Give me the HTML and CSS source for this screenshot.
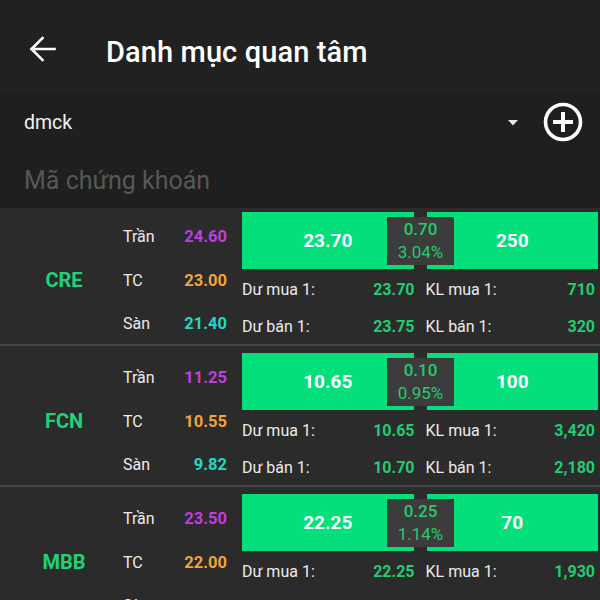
FILE: index.html
```html
<!DOCTYPE html>
<html lang="vi">
<head>
<meta charset="utf-8">
<title>Danh mục quan tâm</title>
<link rel="stylesheet" href="styles.css">
</head>
<body>
<div class="app">
  <header class="topbar">
    <svg class="back" width="30" height="30" viewBox="0 0 30 30" aria-hidden="true">
      <path d="M4.5 15H27.5M15.5 4 4.5 15 15.5 26" fill="none" stroke="#fff" stroke-width="2.6" stroke-linecap="square"/>
    </svg>
    <h1 class="title">Danh mục quan tâm</h1>
  </header>

  <div class="selector">
    <span class="list-name">dmck</span>
    <svg class="caret" width="10" height="6" viewBox="0 0 10 6" aria-hidden="true"><path d="M0 0H10L5 5.5Z" fill="#e6e6e6"/></svg>
    <svg class="add" width="42" height="42" viewBox="0 0 42 42" aria-hidden="true">
      <circle cx="21" cy="21" r="17.5" fill="none" stroke="#fff" stroke-width="3.6"/>
      <path d="M21 11V31M11 21H31" stroke="#fff" stroke-width="4"/>
    </svg>
  </div>

  <div class="search">Mã chứng khoán</div>

  <div class="table">
    <div class="row">
      <div class="ref">
        <div class="ticker">CRE</div>
        <div class="line"><span class="lbl">Trần</span><span class="v ceil">24.60</span></div>
        <div class="line"><span class="lbl">TC</span><span class="v basic">23.00</span></div>
        <div class="line"><span class="lbl">Sàn</span><span class="v floor">21.40</span></div>
      </div>
      <div class="quote">
        <div class="bar">
          <div class="half">23.70</div>
          <div class="half">250</div>
          <div class="chg"><span class="chg-v">0.70</span><span class="chg-p">3.04%</span></div>
        </div>
        <div class="book">
          <div class="cell"><span>Dư mua 1:</span><b>23.70</b></div>
          <div class="cell"><span>KL mua 1:</span><b>710</b></div>
          <div class="cell"><span>Dư bán 1:</span><b>23.75</b></div>
          <div class="cell"><span>KL bán 1:</span><b>320</b></div>
        </div>
      </div>
    </div>

    <div class="row">
      <div class="ref">
        <div class="ticker">FCN</div>
        <div class="line"><span class="lbl">Trần</span><span class="v ceil">11.25</span></div>
        <div class="line"><span class="lbl">TC</span><span class="v basic">10.55</span></div>
        <div class="line"><span class="lbl">Sàn</span><span class="v floor">9.82</span></div>
      </div>
      <div class="quote">
        <div class="bar">
          <div class="half">10.65</div>
          <div class="half">100</div>
          <div class="chg"><span class="chg-v">0.10</span><span class="chg-p">0.95%</span></div>
        </div>
        <div class="book">
          <div class="cell"><span>Dư mua 1:</span><b>10.65</b></div>
          <div class="cell"><span>KL mua 1:</span><b>3,420</b></div>
          <div class="cell"><span>Dư bán 1:</span><b>10.70</b></div>
          <div class="cell"><span>KL bán 1:</span><b>2,180</b></div>
        </div>
      </div>
    </div>

    <div class="row">
      <div class="ref">
        <div class="ticker">MBB</div>
        <div class="line"><span class="lbl">Trần</span><span class="v ceil">23.50</span></div>
        <div class="line"><span class="lbl">TC</span><span class="v basic">22.00</span></div>
        <div class="line"><span class="lbl">Sàn</span><span class="v floor"></span></div>
      </div>
      <div class="quote">
        <div class="bar">
          <div class="half">22.25</div>
          <div class="half">70</div>
          <div class="chg"><span class="chg-v">0.25</span><span class="chg-p">1.14%</span></div>
        </div>
        <div class="book">
          <div class="cell"><span>Dư mua 1:</span><b>22.25</b></div>
          <div class="cell"><span>KL mua 1:</span><b>1,930</b></div>
        </div>
      </div>
    </div>
  </div>
</div>
</body>
</html>
```
FILE: styles.css
```css
* { box-sizing: border-box; }

html, body {
  margin: 0;
  padding: 0;
  background: #1f1f1f;
}

body {
  width: 600px;
  height: 600px;
  overflow: hidden;
  font-family: Roboto, "Noto Sans", "Liberation Sans", sans-serif;
  color: #ececec;
}

.app {
  display: flex;
  flex-direction: column;
}

/* top bar */
.topbar {
  height: 93px;
  background: #212121;
  border-bottom: 1px solid #1a1a1a;
  display: flex;
  align-items: center;
  padding-left: 27px;
  padding-top: 12px;
}

.back { display: block; margin-top: -6px; }

.title {
  margin: 0 0 0 49px;
  font-size: 29px;
  font-weight: 500;
  color: #fff;
  letter-spacing: 0.1px;
}

/* list selector */
.selector {
  height: 57px;
  display: flex;
  align-items: center;
  padding: 0 16px 0 24px;
}

.list-name {
  flex: 1;
  font-size: 19.5px;
  color: #f2f2f2;
  padding-top: 1px;
}

.caret { display: block; margin-right: 24px; margin-top: 2px; }
.add { display: block; }

/* search */
.search {
  height: 58px;
  display: flex;
  align-items: center;
  padding-left: 24px;
  font-size: 25px;
  color: #575757;
  padding-top: 3px;
}

/* table */
.table {
  background: #2b2b2b;
}

.row {
  display: flex;
  height: 141px;
  border-bottom: 2px solid #474747;
}

.row:first-child {
  height: 138px;
}

.ref {
  width: 227px;
  padding: 10px 0 0 5px;
  display: grid;
  grid-template-columns: 118px 1fr;
  grid-template-rows: 43px 44px 43px;
}

.row:first-child .ref { padding-top: 7px; }

.ticker {
  grid-column: 1;
  grid-row: 1 / 4;
  align-self: center;
  text-align: center;
  font-size: 20px;
  font-weight: 700;
  color: #1fd27a;
}

.line {
  grid-column: 2;
  display: flex;
  justify-content: space-between;
  align-items: center;
  font-size: 16px;
}

.lbl { color: #ececec; }

.v { font-weight: 700; font-size: 16.5px; }
.ceil { color: #c03ddf; }
.basic { color: #f0a43c; }
.floor { color: #22d8c8; }

.quote {
  flex: 1;
  margin: 0 2px 0 15px;
  padding-top: 7px;
}

.row:first-child .quote { padding-top: 4px; }

.bar {
  position: relative;
  height: 57px;
  display: flex;
  gap: 13px;
}

.half {
  flex: 1;
  background: #03df7b;
  display: flex;
  align-items: center;
  justify-content: center;
  color: #fff;
  font-size: 19px;
  font-weight: 700;
}

.chg {
  position: absolute;
  left: 50%;
  top: 5px;
  bottom: 4px;
  width: 67px;
  margin-left: -33px;
  background: #3c3c3c;
  display: flex;
  flex-direction: column;
  align-items: center;
  justify-content: center;
  color: #27c972;
  font-size: 17px;
  line-height: 23px;
}

.chg-v { font-weight: 500; }

.book {
  margin-top: 2px;
  display: grid;
  grid-template-columns: 1fr 1fr;
  column-gap: 11px;
}

.cell {
  display: flex;
  justify-content: space-between;
  line-height: 37px;
  font-size: 16px;
  color: #ececec;
}

.cell:nth-child(even) { padding-right: 3px; }

.cell b {
  color: #22cc72;
  font-weight: 700;
}
```
